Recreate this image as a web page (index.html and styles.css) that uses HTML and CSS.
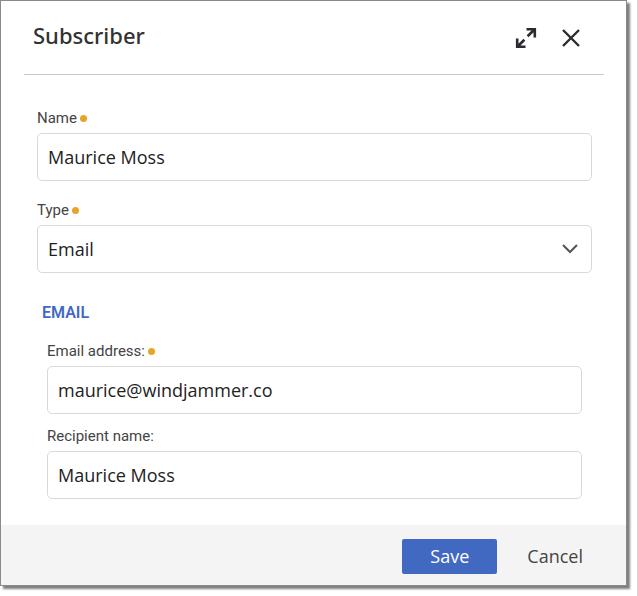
FILE: index.html
```
<!DOCTYPE html>
<html lang="en">

<head>
    <meta charset="UTF-8">
    <meta name="viewport" content="width=device-width, initial-scale=1.0">
    <title>Subscriber</title>
    <link rel="stylesheet" href="styles.css">
</head>

<body>
    <form class="dialog">
        <header class="dialog-header">
            <h1>Subscriber</h1>
            <button type="button" class="icon-button" aria-label="Expand">
                <svg width="22" height="22" viewBox="0 0 22 22" fill="none" stroke="#2b2b33" stroke-width="2.6">
                    <path d="M11.5 2.2h8.3v8.3M19.2 2.8l-6.6 6.4M2.2 11.5v8.3h8.3M2.8 19.2l6.6-6.4" />
                </svg>
            </button>
            <button type="button" class="icon-button" aria-label="Close">
                <svg width="22" height="22" viewBox="0 0 22 22" fill="none" stroke="#2b2b2b" stroke-width="2.4">
                    <path d="M3 3l16 16M19 3L3 19" />
                </svg>
            </button>
        </header>

        <div class="dialog-body">
            <div class="field">
                <label class="required" for="name">Name</label>
                <input type="text" id="name" value="Maurice Moss">
            </div>
            <div class="field">
                <label class="required" for="type">Type</label>
                <div class="select-wrap">
                    <select id="type">
                        <option>Email</option>
                    </select>
                    <svg class="chevron" width="16" height="10" viewBox="0 0 16 10" fill="none" stroke="#555" stroke-width="2">
                        <path d="M1 1l7 7 7-7" />
                    </svg>
                </div>
            </div>

            <h2>EMAIL</h2>
            <div class="group">
                <div class="field">
                    <label class="required" for="email">Email address:</label>
                    <input type="text" id="email" value="maurice@windjammer.co">
                </div>
                <div class="field">
                    <label for="recipient">Recipient name:</label>
                    <input type="text" id="recipient" value="Maurice Moss">
                </div>
            </div>
        </div>

        <footer class="dialog-footer">
            <button type="submit" class="save">Save</button>
            <button type="button" class="cancel">Cancel</button>
        </footer>
    </form>
</body>

</html>
```
FILE: styles.css
```
* {
    margin: 0;
    padding: 0;
    box-sizing: border-box;
}

body {
    font-family: 'Open Sans', 'Noto Sans', sans-serif;
    background: #fff;
    padding: 0 10px 10px 0;
}

.dialog {
    background: #fff;
    border: 1px solid #8a8a8a;
    box-shadow: 3px 3px 2px rgba(0, 0, 0, 0.5);
}

.dialog-header {
    display: flex;
    align-items: center;
    gap: 23px;
    height: 74px;
    margin: 0 22px 0 23px;
    padding: 0 22px 0 9px;
    border-bottom: 1px solid #c8c8c8;
}

h1 {
    flex: 1;
    padding-bottom: 6px;
    font-family: 'Noto Sans', 'Open Sans', sans-serif;
    font-size: 22px;
    font-weight: 500;
    line-height: 30px;
    color: #333;
}

button {
    border: none;
    background: none;
    font-family: inherit;
    cursor: pointer;
}

.icon-button {
    width: 22px;
    height: 22px;
}

.icon-button svg {
    display: block;
}

.dialog-body {
    padding: 33px 34px 26px 36px;
}

.field + .field {
    margin-top: 19px;
}

label {
    display: flex;
    align-items: center;
    gap: 3px;
    margin-bottom: 5px;
    font-family: Roboto, sans-serif;
    font-size: 15px;
    line-height: 20px;
    color: #444;
}

.required::after {
    content: "";
    width: 7px;
    height: 7px;
    border-radius: 50%;
    background: #e8a428;
}

input,
select {
    display: block;
    width: 100%;
    height: 48px;
    padding: 0 10px;
    border: 1px solid #d9d9d9;
    border-radius: 5px;
    background: #fff;
    font-family: inherit;
    font-size: 18px;
    color: #222;
    appearance: none;
}

.select-wrap {
    position: relative;
}

.chevron {
    position: absolute;
    right: 14px;
    top: 19px;
    pointer-events: none;
}

h2 {
    margin: 30px 0 18px 5px;
    font-family: Roboto, sans-serif;
    font-size: 16px;
    font-weight: 600;
    line-height: 20px;
    color: #4169c1;
}

.group {
    padding: 0 10px;
}

.group .field + .field {
    margin-top: 12px;
}

.dialog-footer {
    display: flex;
    align-items: center;
    justify-content: flex-end;
    gap: 20px;
    height: 60px;
    padding: 2px 33px 0 0;
    background: #f4f4f4;
}

.save,
.cancel {
    height: 35px;
    font-size: 18px;
}

.save {
    width: 95px;
    border-radius: 2px;
    background: #4169c1;
    color: #fff;
}

.cancel {
    padding: 0 10px;
    color: #444;
}
```
